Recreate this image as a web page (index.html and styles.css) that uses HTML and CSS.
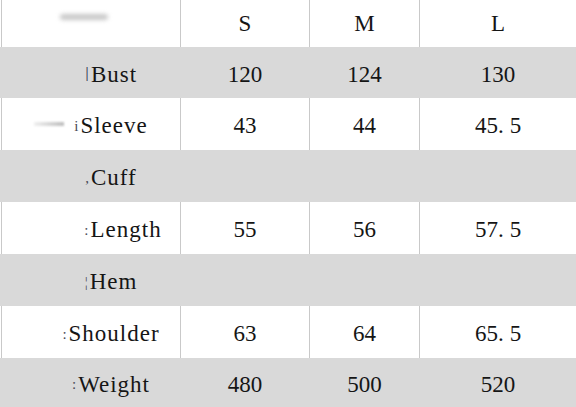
FILE: index.html
```html
<!DOCTYPE html>
<html lang="en">
<head>
<meta charset="utf-8">
<title>Size chart</title>
<link rel="stylesheet" href="styles.css">
</head>
<body>
<div class="chart">
  <div class="row head">
    <div class="cell label"><span class="smudge head-smudge"></span></div>
    <div class="cell">S</div>
    <div class="cell">M</div>
    <div class="cell">L</div>
  </div>
  <div class="row gray r51">
    <div class="cell label"><span class="mark bar">ǀ</span>Bust</div>
    <div class="cell">120</div>
    <div class="cell">124</div>
    <div class="cell">130</div>
  </div>
  <div class="row">
    <div class="cell label"><span class="smudge sleeve-smudge"></span><span class="mark">i</span>Sleeve</div>
    <div class="cell">43</div>
    <div class="cell">44</div>
    <div class="cell">45<span class="dot">.</span>5</div>
  </div>
  <div class="row gray">
    <div class="cell label"><span class="mark">,</span>Cuff</div>
    <div class="cell"></div>
    <div class="cell"></div>
    <div class="cell"></div>
  </div>
  <div class="row">
    <div class="cell label shifted"><span class="mark">:</span>Length</div>
    <div class="cell">55</div>
    <div class="cell">56</div>
    <div class="cell">57<span class="dot">.</span>5</div>
  </div>
  <div class="row gray">
    <div class="cell label"><span class="mark">¦</span>Hem</div>
    <div class="cell"></div>
    <div class="cell"></div>
    <div class="cell"></div>
  </div>
  <div class="row">
    <div class="cell label"><span class="mark">:</span>Shoulder</div>
    <div class="cell">63</div>
    <div class="cell">64</div>
    <div class="cell">65<span class="dot">.</span>5</div>
  </div>
  <div class="row gray last">
    <div class="cell label"><span class="mark">:</span>Weight</div>
    <div class="cell">480</div>
    <div class="cell">500</div>
    <div class="cell">520</div>
  </div>
</div>
</body>
</html>
```

FILE: styles.css
```css
html, body {
  margin: 0;
  padding: 0;
  background: #ffffff;
}

body {
  width: 576px;
  height: 407px;
  overflow: hidden;
  font-family: "Liberation Serif", "DejaVu Serif", serif;
  font-size: 23px;
  color: #151515;
}

.chart {
  display: flex;
  flex-direction: column;
}

.row {
  display: grid;
  grid-template-columns: 179px 129px 110px 1fr;
  padding-left: 1px;
  height: 52px;
  background: #ffffff;
}

.row.head {
  height: 47px;
}

.row.r51 {
  height: 51px;
}

.row.last {
  height: 49px;
}

.cell {
  display: flex;
  align-items: center;
  justify-content: center;
  border-left: 1px solid #c9c9c9;
  padding-top: 4px;
  box-sizing: border-box;
  white-space: nowrap;
  font-family: "Liberation Serif", "DejaVu Serif", serif;
}

.row.head .cell {
  padding-top: 0;
}

.row.gray {
  background: #d9d9d9;
}

.row.gray .cell {
  border-left-color: #d9d9d9;
}

.cell.label {
  padding-left: 40px;
  letter-spacing: 1px;
}

.cell.label.shifted {
  padding-left: 64px;
}

.mark {
  font-size: 15px;
  color: #4a4a55;
  margin-right: 1px;
}

.mark.bar {
  font-size: 20px;
  color: #3a3f5a;
}

.dot {
  margin-right: 6px;
}

.smudge {
  display: inline-block;
  filter: blur(2px);
}

.head-smudge {
  width: 48px;
  height: 6px;
  background: #c8c8c8;
  border-radius: 3px;
  margin-right: 55px;
  margin-bottom: 14px;
}

.sleeve-smudge {
  width: 30px;
  height: 4px;
  background: linear-gradient(to right, #f0f0f0, #bdbdbd);
  margin-left: -40px;
  margin-right: 10px;
  margin-bottom: 4px;
  filter: blur(1px);
}
```
